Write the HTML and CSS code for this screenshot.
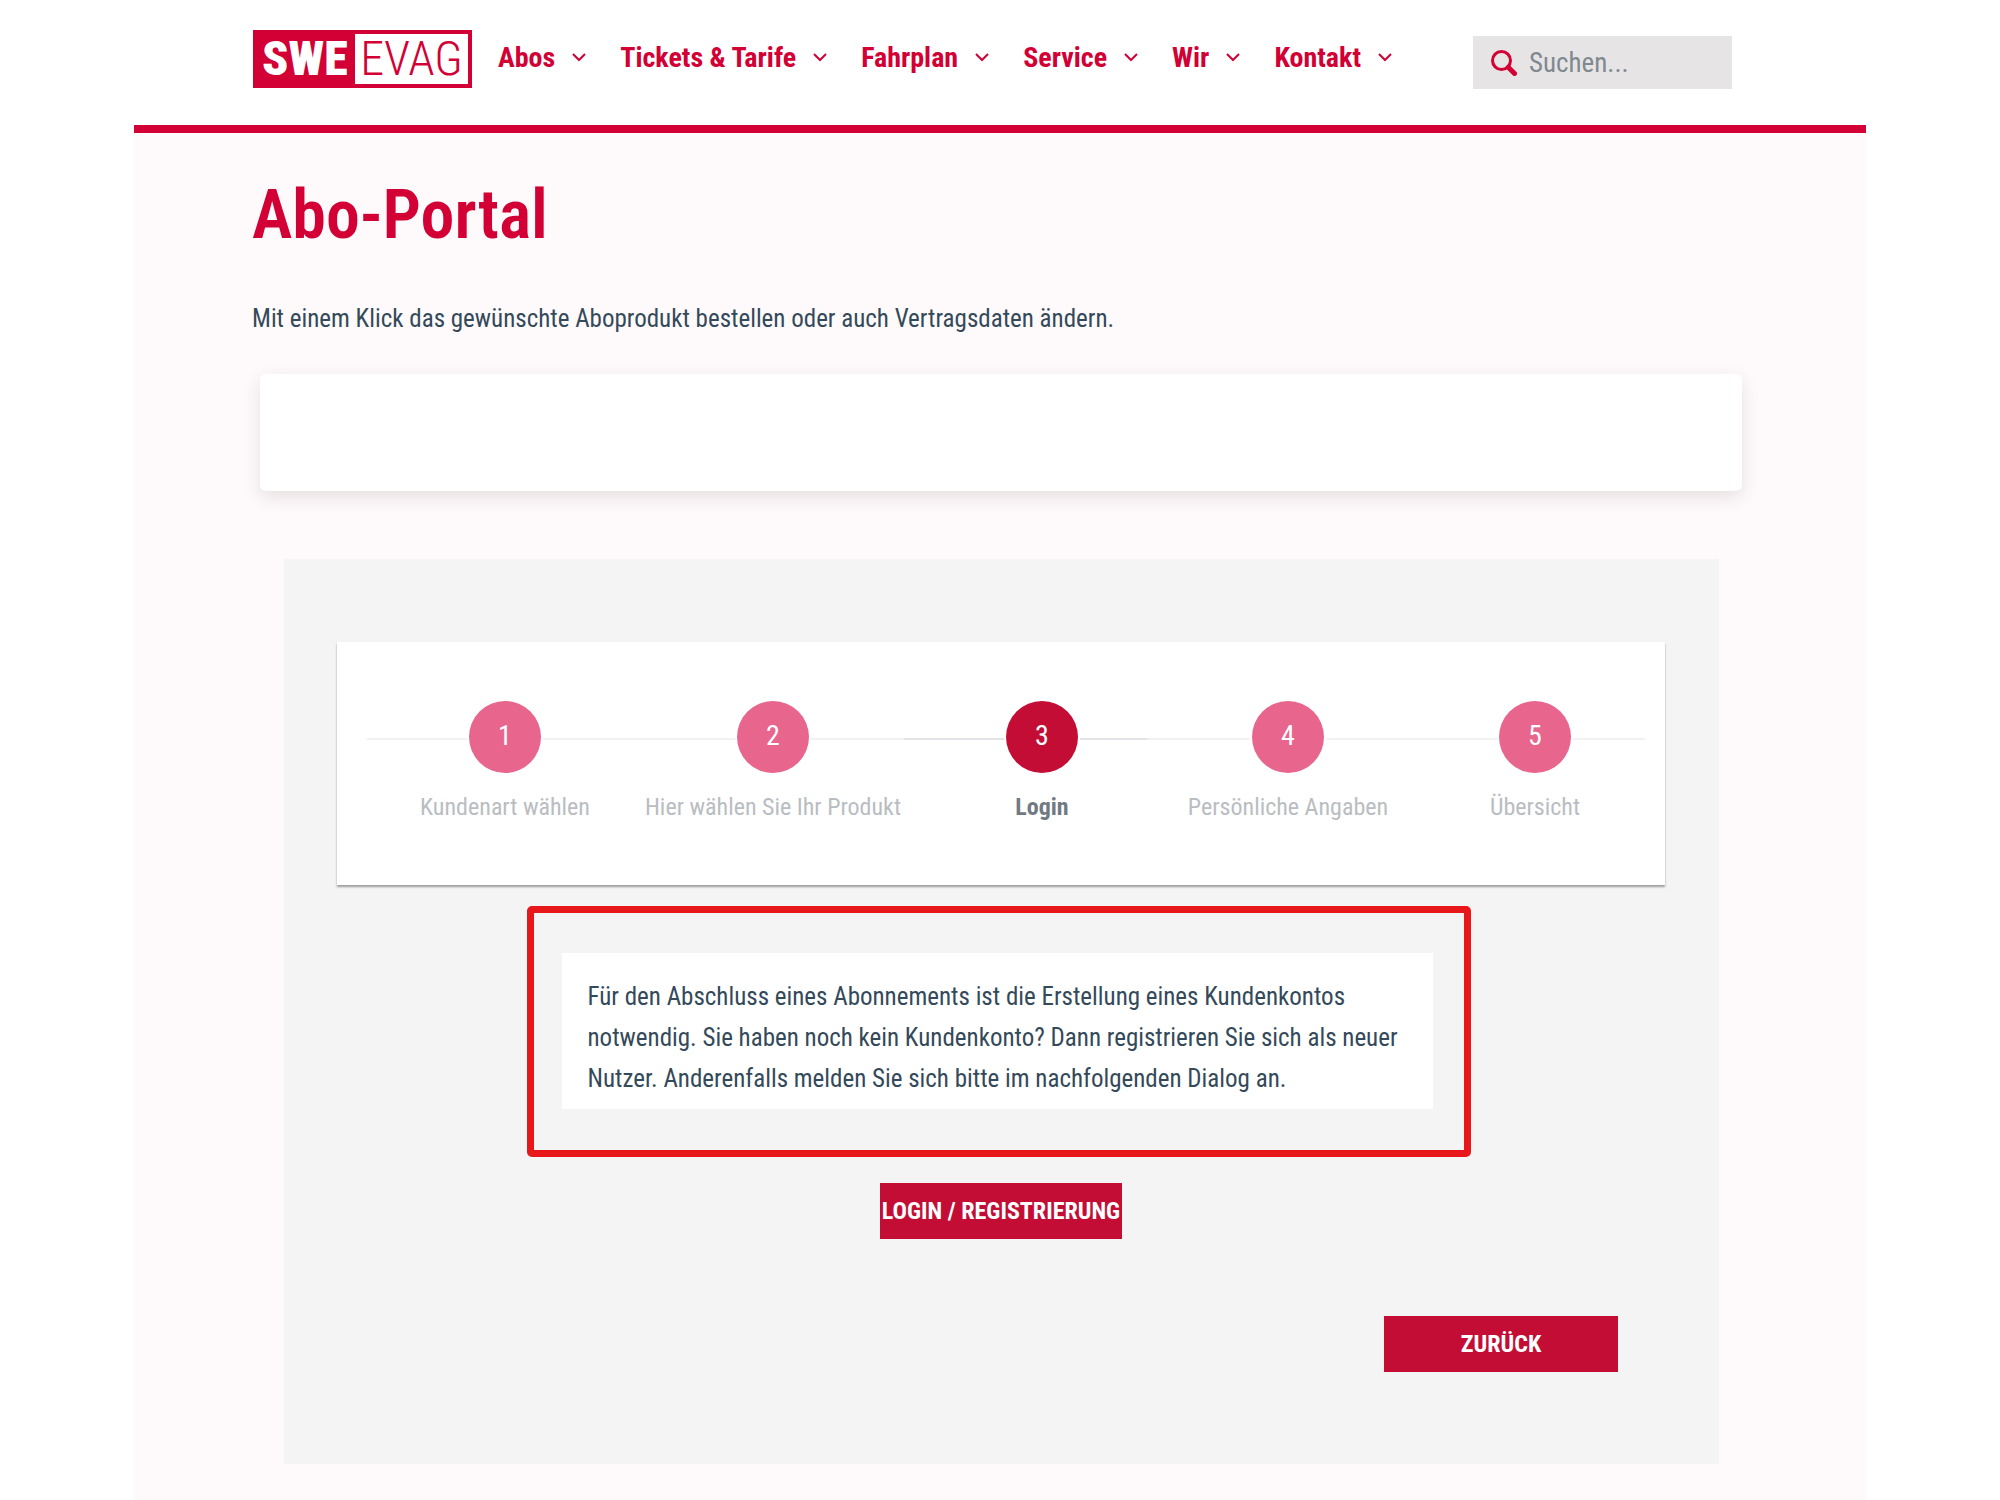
FILE: index.html
```html
<!DOCTYPE html>
<html lang="de">
<head>
<meta charset="utf-8">
<meta name="viewport" content="width=device-width, initial-scale=1">
<title>Abo-Portal</title>
<link rel="stylesheet" href="styles.css">
</head>
<body>
<div class="page">
  <header class="header">
    <a class="logo" href="#"><span class="logo-swe">SWE</span><span class="logo-evag">EVAG</span></a>
    <nav class="nav">
      <a href="#">Abos<svg class="chevron" viewBox="0 0 16 10"><path d="M2 2l6 6 6-6"/></svg></a>
      <a href="#">Tickets &amp; Tarife<svg class="chevron" viewBox="0 0 16 10"><path d="M2 2l6 6 6-6"/></svg></a>
      <a href="#">Fahrplan<svg class="chevron" viewBox="0 0 16 10"><path d="M2 2l6 6 6-6"/></svg></a>
      <a href="#">Service<svg class="chevron" viewBox="0 0 16 10"><path d="M2 2l6 6 6-6"/></svg></a>
      <a href="#">Wir<svg class="chevron" viewBox="0 0 16 10"><path d="M2 2l6 6 6-6"/></svg></a>
      <a href="#">Kontakt<svg class="chevron" viewBox="0 0 16 10"><path d="M2 2l6 6 6-6"/></svg></a>
    </nav>
    <label class="search">
      <svg class="search-icon" viewBox="0 0 26 26"><circle cx="10.500" cy="10.500" r="9"/><path class="handle" d="M18 18l5.500 5.500"/><path d="M16.500 16.500l4 4"/></svg>
      <input type="search" placeholder="Suchen..." aria-label="Suchen">
    </label>
  </header>
  <main class="main">
    <h1>Abo-Portal</h1>
    <p class="intro">Mit einem Klick das gewünschte Aboprodukt bestellen oder auch Vertragsdaten ändern.</p>
    <div class="card"></div>
    <section class="panel">
      <ol class="steps">
        <li class="step"><span class="dot">1</span><span class="label">Kundenart wählen</span></li>
        <li class="step"><span class="dot">2</span><span class="label">Hier wählen Sie Ihr Produkt</span></li>
        <li class="step active" aria-current="step"><span class="dot">3</span><span class="label">Login</span></li>
        <li class="step"><span class="dot">4</span><span class="label">Persönliche Angaben</span></li>
        <li class="step"><span class="dot">5</span><span class="label">Übersicht</span></li>
      </ol>
      <div class="notice">
        <p>Für den Abschluss eines Abonnements ist die Erstellung eines Kundenkontos<br>notwendig. Sie haben noch kein Kundenkonto? Dann registrieren Sie sich als neuer<br>Nutzer. Anderenfalls melden Sie sich bitte im nachfolgenden Dialog an.</p>
      </div>
      <button class="button login" type="button">LOGIN / REGISTRIERUNG</button>
      <button class="button back" type="button">ZURÜCK</button>
    </section>
  </main>
</div>
</body>
</html>
```
FILE: styles.css
```css
* { box-sizing: border-box; }

body {
  margin: 0;
  background: #fff;
  color: #34495a;
  font-family: "Roboto Condensed", "Liberation Sans Narrow", Roboto, sans-serif;
  font-size: 25px;
}

.page {
  display: flex;
  flex-direction: column;
  min-height: 100vh;
  margin: 0 134px;
}

.header {
  display: flex;
  align-items: flex-start;
  padding: 30px 134px 36px 119px;
  border-bottom: 8px solid #d20034;
}

.logo {
  display: flex;
  flex: none;
  width: 219px;
  height: 58px;
  padding: 4px;
  background: #d20034;
  font-size: 48px;
  line-height: 50px;
  text-decoration: none;
}
.logo-swe { width: 98px; padding-left: 5px; color: #fff; font-weight: 900; }
.logo-evag { flex: 1; text-align: center; background: #fff; color: #d20034; font-weight: 350; }

.nav {
  display: flex;
  flex: 1;
  gap: 33px;
  margin-left: 26px;
  white-space: nowrap;
}
.nav a {
  display: flex;
  align-items: center;
  gap: 16px;
  height: 54px;
  color: #d20034;
  font-size: 28px;
  font-weight: 700;
  text-decoration: none;
}
.chevron { width: 16px; height: 10px; fill: none; stroke: #d20034; stroke-width: 2; }

.search {
  display: flex;
  align-items: center;
  gap: 12px;
  width: 259px;
  height: 53px;
  margin-top: 6px;
  padding: 0 18px;
  background: #e7e4e5;
}
.search-icon { flex: none; width: 26px; height: 26px; fill: none; stroke: #d20034; stroke-width: 3; stroke-linecap: round; }
.search-icon .handle { stroke-width: 5; }
.search input {
  width: 100%;
  min-width: 0;
  padding: 0;
  border: 0;
  outline: 0;
  background: none;
  font: inherit;
  font-size: 27px;
}
.search input::placeholder { color: #7f8990; opacity: 1; }

.main { flex: 1; padding: 40px 119px 36px 118px; background: #fefafb; }

h1 { margin: 0; color: #d20034; font-size: 68px; font-weight: 600; line-height: 84px; }
.intro { margin: 46px 0 0; line-height: 32px; }

.card {
  height: 117px;
  margin: 39px 5px 0 8px;
  border-radius: 6px;
  background: #fff;
  box-shadow: 0 6px 18px rgba(60, 30, 30, 0.12);
}

.panel {
  display: flex;
  flex-direction: column;
  align-items: center;
  margin: 68px 28px 0 32px;
  padding: 83px 54px 92px 53px;
  background: #f4f4f4;
}

.steps {
  position: relative;
  display: grid;
  grid-template-columns: 216fr 320fr 218fr 274fr 220fr;
  width: 100%;
  height: 243px;
  margin: 0;
  padding: 59px 20px 0 60px;
  background: #fff;
  box-shadow: 0 2px 2px rgba(0, 0, 0, 0.36);
  list-style: none;
}
.steps::before {
  content: "";
  position: absolute;
  top: 96px;
  left: 30px;
  right: 20px;
  height: 2px;
  background: linear-gradient(90deg, #f2f2f3 42%, #e2e4e8 42% 61%, #f2f2f3 61%);
}
.step { position: relative; display: flex; flex-direction: column; align-items: center; gap: 18px; white-space: nowrap; }
.dot {
  width: 72px;
  height: 72px;
  border-radius: 50%;
  background: #e8658d;
  box-shadow: 0 0 0 2px #fff;
  color: #fff;
  font-size: 28px;
  line-height: 70px;
  text-align: center;
}
.label { color: #b9bdc1; font-size: 24px; line-height: 32px; }
.active .dot { background: #c40d35; }
.active .label { color: #717a83; font-weight: 700; }

.notice {
  width: 944px;
  max-width: 100%;
  margin: 21px 5px 0 0;
  padding: 40px 31px 41px 28px;
  border: 7px solid #e81719;
  border-radius: 5px;
}
.notice p { margin: 0; padding: 23px 0 10px 26px; background: #fff; line-height: 41px; white-space: nowrap; }

.button {
  height: 56px;
  padding: 0;
  border: 0;
  background: #c40d35;
  color: #fff;
  font: inherit;
  font-size: 24px;
  font-weight: 700;
  white-space: nowrap;
}
.login { width: 242px; margin-top: 26px; }
.back { align-self: flex-end; width: 234px; margin: 77px 47px 0 0; }
```
